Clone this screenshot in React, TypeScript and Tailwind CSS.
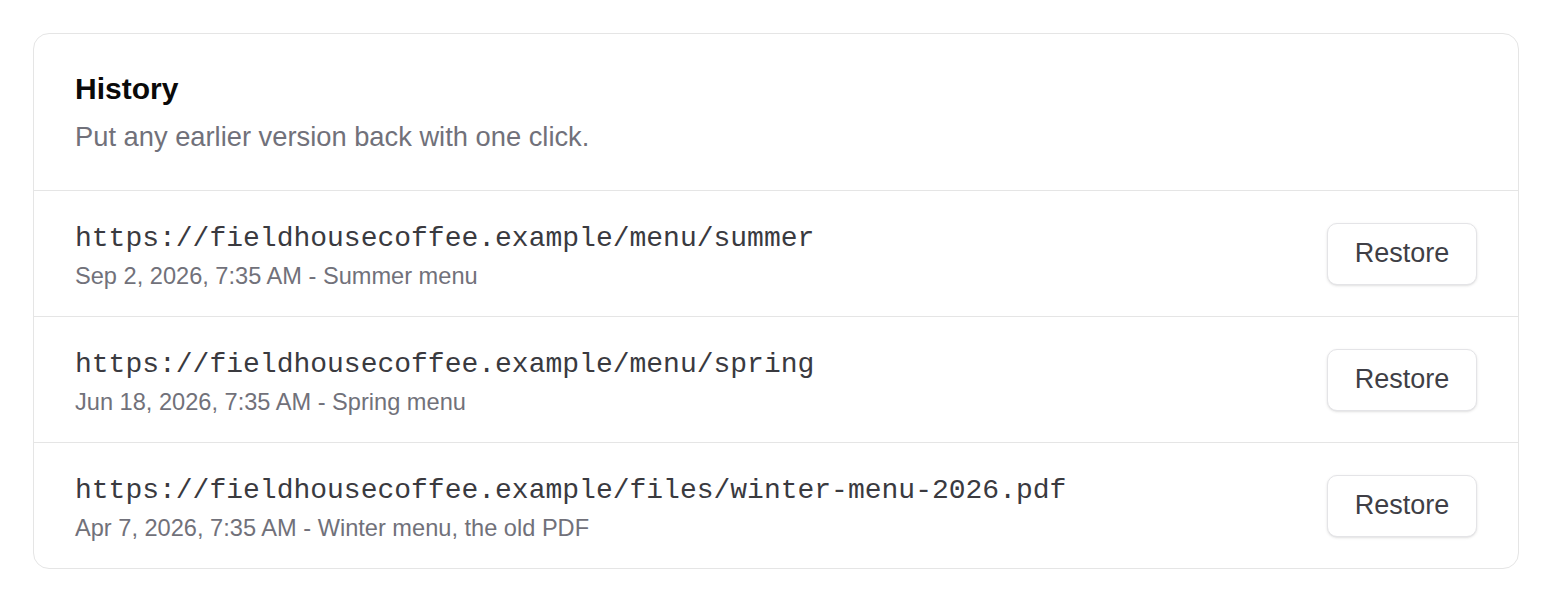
import React from 'react';

const versions = [
  {
    url: 'https://fieldhousecoffee.example/menu/summer',
    when: 'Sep 2, 2026, 7:35 AM',
    note: 'Summer menu',
  },
  {
    url: 'https://fieldhousecoffee.example/menu/spring',
    when: 'Jun 18, 2026, 7:35 AM',
    note: 'Spring menu',
  },
  {
    url: 'https://fieldhousecoffee.example/files/winter-menu-2026.pdf',
    when: 'Apr 7, 2026, 7:35 AM',
    note: 'Winter menu, the old PDF',
  },
];

export default function App() {
  return (
    <div className="min-h-screen bg-white p-[33px] font-['Liberation_Sans',Arial,sans-serif]">
      <section className="rounded-[16px] border border-[#e5e5e5] bg-white">
        {/* Header */}
        <div className="px-[41px] pt-[37px] pb-[35px]">
          <h2 className="text-[30px] leading-[36px] font-semibold text-[#0a0a0a]">History</h2>
          <p className="mt-[12px] text-[27.3px] leading-[36px] text-[#71717a]">
            Put any earlier version back with one click.
          </p>
        </div>

        {/* Version rows */}
        {versions.map((v) => (
          <div
            key={v.url}
            className="flex h-[126px] items-center justify-between border-t border-[#e5e5e5] px-[41px]"
          >
            <div className="flex flex-col pt-[4px]">
              <span className="font-['Liberation_Mono','DejaVu_Sans_Mono',monospace] text-[28px] leading-[40px] text-[#3a3a3f]">
                {v.url}
              </span>
              <span className="mt-px text-[23.6px] leading-[32px] text-[#71717a]">
                {v.when} - {v.note}
              </span>
            </div>
            <button className="h-[62px] w-[150px] rounded-[10px] border border-[#e4e4e7] bg-white text-[27px] text-[#3f3f46] shadow-sm">
              Restore
            </button>
          </div>
        ))}
      </section>
    </div>
  );
}
